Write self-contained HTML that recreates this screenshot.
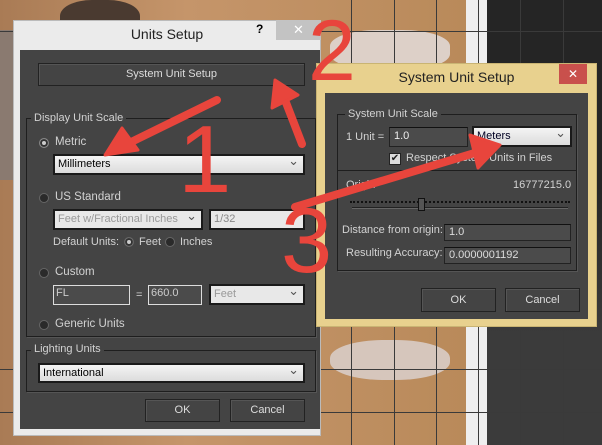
<!DOCTYPE html>
<html><head><meta charset="utf-8"><style>
*{box-sizing:border-box;margin:0;padding:0}
body{width:602px;height:445px;overflow:hidden;position:relative;font-family:"Liberation Sans",sans-serif;font-size:11px;background:#b98a5a}
.a{position:absolute}
.t{color:#d2d2d2;font-size:11px;white-space:nowrap}
.dd{position:absolute;background:linear-gradient(#f4f4f4,#dcdcdc);border:2px solid #1a1a1a;color:#000;font-size:11px;padding:2px 3px;white-space:nowrap}
.dd:after{content:"⌄";position:absolute;right:4px;top:-3px;font-size:13px;color:#555}
.dis{background:#e8e8e8;color:#999}
.fld{position:absolute;background:#4b4b4b;border:1px solid #222;border-top-color:#111;color:#ddd;font-size:11px;padding:2px 4px}
.btn{position:absolute;background:#444;border:1px solid #222;box-shadow:inset 1px 1px 0 #555;color:#ddd;text-align:center;font-size:11px}
.grp{position:absolute;border:1px solid #1e1e1e;box-shadow:1px 1px 0 #555}
.gl{position:absolute;background:#444;color:#d2d2d2;padding:0 3px;font-size:11px}
.rad{position:absolute;width:10px;height:10px;border-radius:50%;background:#2a2a2a;border:1px solid #666}
</style></head><body>
<!-- background -->
<div class="a" style="left:0;top:0;width:466px;height:445px;background:linear-gradient(90deg,#a97b55,#c5956a 40%,#b98a5a)"></div>
<div class="a" style="left:60px;top:0;width:80px;height:40px;background:#4a3a30;border-radius:40%"></div>
<div class="a" style="left:0;top:30px;width:14px;height:150px;background:#8a7a70"></div>
<div class="a" style="left:330px;top:30px;width:120px;height:40px;background:#ddd0c8;border-radius:40%"></div>
<div class="a" style="left:330px;top:340px;width:120px;height:40px;background:#d6c6bc;border-radius:45%"></div>
<div class="a" style="left:466px;top:0;width:21px;height:445px;background:#efefef"></div>
<div class="a" style="left:487px;top:0;width:115px;height:445px;background:linear-gradient(#252525,#252525 40%,#3b3b3b 75%)"></div>
<svg class="a" style="left:0;top:0" width="602" height="445">
<g stroke="#3a3a3a" stroke-width="1">
<line x1="0" y1="31.5" x2="602" y2="31.5"/><line x1="0" y1="369.5" x2="602" y2="369.5"/><line x1="0" y1="412.5" x2="602" y2="412.5"/>
<line x1="351.5" y1="0" x2="351.5" y2="445"/><line x1="394.5" y1="0" x2="394.5" y2="445"/><line x1="436.5" y1="0" x2="436.5" y2="445"/><line x1="478.5" y1="0" x2="478.5" y2="445"/><line x1="520.5" y1="0" x2="520.5" y2="445"/><line x1="563.5" y1="0" x2="563.5" y2="445"/>
</g></svg>

<!-- Units Setup -->
<div class="a" style="left:13px;top:20px;width:308px;height:416px;background:#ebebeb;border:1px solid #bbb"></div>
<div class="a t" style="left:13px;top:26px;width:308px;text-align:center;color:#222;font-size:14px">Units Setup</div>
<div class="a" style="left:256px;top:22px;color:#000;font-weight:bold;font-size:12px">?</div>
<div class="a" style="left:276px;top:20px;width:45px;height:20px;background:#c3c3c3;color:#fff;text-align:center;font-size:13px;line-height:20px">✕</div>
<div class="a" style="left:20px;top:50px;width:300px;height:379px;background:#444"></div>
<div class="btn" style="left:38px;top:63px;width:267px;height:23px;line-height:21px">System Unit Setup</div>
<div class="grp" style="left:26px;top:118px;width:290px;height:219px"></div>
<div class="gl" style="left:31px;top:112px">Display Unit Scale</div>
<div class="rad" style="left:39px;top:138px;background:#ccc;border-color:#888;box-shadow:inset 0 0 0 2px #333"></div>
<div class="a t" style="left:55px;top:136px;font-size:11.5px">Metric</div>
<div class="dd" style="left:53px;top:154px;width:252px;height:21px">Millimeters</div>
<div class="rad" style="left:39px;top:193px"></div>
<div class="a t" style="left:55px;top:191px;font-size:11.5px">US Standard</div>
<div class="dd dis" style="left:53px;top:209px;width:150px;height:21px">Feet w/Fractional Inches</div>
<div class="dd dis" style="left:209px;top:209px;width:96px;height:21px;color:#888">1/32</div>
<style>.dd.nochev:after{content:""}</style>
<div class="a t" style="left:53px;top:236px;font-size:11px">Default Units:</div>
<div class="rad" style="left:124px;top:237px;background:#ccc;box-shadow:inset 0 0 0 2px #333"></div>
<div class="a t" style="left:139px;top:236px">Feet</div>
<div class="rad" style="left:165px;top:237px"></div>
<div class="a t" style="left:180px;top:236px">Inches</div>
<div class="rad" style="left:39px;top:268px"></div>
<div class="a t" style="left:55px;top:266px;font-size:11.5px">Custom</div>
<div class="a" style="left:53px;top:285px;width:77px;height:20px;background:#4b4b4b;border:1px solid #ddd;color:#ccc;font-size:11px;padding:1px 2px">FL</div>
<div class="a t" style="left:136px;top:289px">=</div>
<div class="a" style="left:148px;top:285px;width:54px;height:20px;background:#4b4b4b;border:1px solid #ddd;color:#ccc;font-size:11px;padding:1px 2px">660.0</div>
<div class="dd dis" style="left:209px;top:284px;width:96px;height:21px;color:#999">Feet</div>
<div class="rad" style="left:39px;top:320px"></div>
<div class="a t" style="left:55px;top:318px;font-size:11.5px">Generic Units</div>
<div class="grp" style="left:26px;top:350px;width:290px;height:42px"></div>
<div class="gl" style="left:31px;top:343px">Lighting Units</div>
<div class="dd" style="left:38px;top:363px;width:267px;height:20px">International</div>
<div class="btn" style="left:145px;top:399px;width:75px;height:23px;line-height:21px">OK</div>
<div class="btn" style="left:230px;top:399px;width:75px;height:23px;line-height:21px">Cancel</div>

<!-- System Unit Setup -->
<div class="a" style="left:316px;top:63px;width:281px;height:264px;background:#e8d18e;border:1px solid #c9b473"></div>
<div class="a" style="left:316px;top:69px;width:281px;text-align:center;color:#222;font-size:14px">System Unit Setup</div>
<div class="a" style="left:559px;top:64px;width:28px;height:20px;background:#c9504c;color:#fff;text-align:center;font-size:12px;line-height:20px">✕</div>
<div class="a" style="left:325px;top:93px;width:263px;height:226px;background:#444"></div>
<div class="grp" style="left:337px;top:114px;width:240px;height:157px"></div>
<div class="a" style="left:337px;top:170px;width:240px;height:1px;background:#1e1e1e"></div>
<div class="gl" style="left:345px;top:108px">System Unit Scale</div>
<div class="a t" style="left:346px;top:131px">1 Unit =</div>
<div class="fld" style="left:389px;top:127px;width:79px;height:20px;color:#eee">1.0</div>
<div class="dd" style="left:472px;top:126px;width:100px;height:21px;color:#002">Meters</div>
<div class="a" style="left:389px;top:153px;width:12px;height:12px;background:#ddd;border:1px solid #222;color:#222;font-size:10px;line-height:10px;text-align:center">✔</div>
<div class="a t" style="left:406px;top:152px">Respect System Units in Files</div>
<div class="a t" style="left:346px;top:179px">Origin</div>
<div class="a t" style="left:513px;top:179px">16777215.0</div>
<div class="a" style="left:350px;top:201px;width:220px;border-top:2px dotted #111"></div>
<div class="a" style="left:352px;top:207px;width:216px;height:2px;background:#222;border-bottom:1px solid #666"></div>
<div class="a" style="left:418px;top:198px;width:7px;height:13px;background:#555;border:1px solid #111"></div>
<div class="a t" style="left:342px;top:224px">Distance from origin:</div>
<div class="fld" style="left:444px;top:224px;width:127px;height:17px;padding-top:1px">1.0</div>
<div class="a t" style="left:346px;top:247px">Resulting Accuracy:</div>
<div class="fld" style="left:444px;top:247px;width:127px;height:17px;padding-top:1px">0.0000001192</div>
<div class="btn" style="left:421px;top:288px;width:75px;height:24px;line-height:22px">OK</div>
<div class="btn" style="left:505px;top:288px;width:75px;height:24px;line-height:22px">Cancel</div>

<!-- annotations -->
<svg class="a" style="left:0;top:0" width="602" height="445">
<g stroke="#e8453c" stroke-width="8" stroke-linecap="round" fill="#e8453c">
<line x1="217" y1="100" x2="125" y2="145"/>
<polygon points="105,155 122,128 138,150" stroke-width="3" stroke-linejoin="round"/>
<line x1="302" y1="144" x2="285" y2="100"/>
<polygon points="275,80 298,95 272,108" stroke-width="3" stroke-linejoin="round"/>
<line x1="295" y1="207" x2="478" y2="152"/>
<polygon points="500,145 470,135 478,168" stroke-width="3" stroke-linejoin="round"/>
</g>
<g fill="#e8453c" font-family="Liberation Sans,sans-serif">
<text x="178" y="192" font-size="96">1</text>
<text x="308" y="80" font-size="86">2</text>
<text x="281" y="272" font-size="92">3</text>
</g>
</svg>
</body></html>
